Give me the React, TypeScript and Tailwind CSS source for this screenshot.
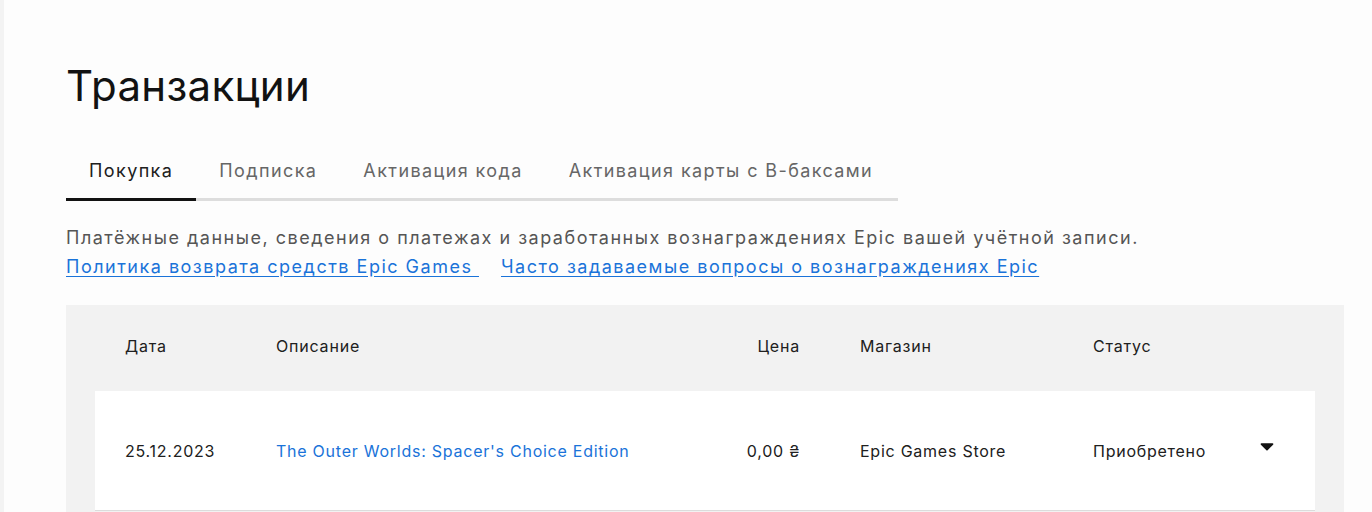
import { FaCaretDown } from 'react-icons/fa';

const tabs = ['Покупка', 'Подписка', 'Активация кода', 'Активация карты с В-баксами'];

export default function App() {
  return (
    <div className="flex min-h-[512px] bg-[#fdfdfd] font-['Inter',sans-serif] text-[#202020]">
      <div className="w-[4px] shrink-0 bg-[#f3f3f3]" />
      <main className="flex-1 pl-[62px] pr-[28px] pt-[56px]">
        <h1 className="text-[42px] leading-[60px] tracking-[0.3px] text-[#121212]">Транзакции</h1>

        {/* tabs */}
        <div className="mt-[41px] flex w-[832px] border-b-[3px] border-[#dddddd]">
          {tabs.map((t, i) => (
            <button
              key={t}
              className={
                i === 0
                  ? '-mb-[3px] border-b-[3px] border-[#121212] px-[23px] pb-[14px] text-[18px] tracking-[1.4px] text-[#202020]'
                  : '-mb-[3px] border-b-[3px] border-transparent px-[23px] pb-[14px] text-[18px] tracking-[1.4px] text-[#666666]'
              }
            >
              {t}
            </button>
          ))}
        </div>

        <p className="mt-[22px] text-[18px] leading-[29px] tracking-[1.5px] text-[#555555]">
          Платёжные данные, сведения о платежах и заработанных вознаграждениях Epic вашей учётной записи.
        </p>
        <div className="flex gap-[22px] text-[18px] leading-[29px] tracking-[1.5px] text-[#1a73d9]">
          <a className="underline underline-offset-[3px]">Политика возврата средств Epic Games&nbsp;</a>
          <a className="underline underline-offset-[3px]">Часто задаваемые вопросы о вознаграждениях Epic</a>
        </div>

        {/* table */}
        <div className="mt-[24px] bg-[#f2f2f2] px-[29px] pb-[4px]">
          <div className="flex h-[86px] items-center pb-[4px] text-[16px] tracking-[0.8px] text-[#202020]">
            <div className="w-[181px] pl-[30px]">Дата</div>
            <div className="w-[430px]">Описание</div>
            <div className="w-[94px] text-right">Цена</div>
            <div className="w-[293px] pl-[60px]">Магазин</div>
            <div className="w-[166px]">Статус</div>
          </div>
          <div className="flex h-[120px] items-center border-b border-[#dcdcdc] bg-white text-[16px] tracking-[0.75px] text-[#202020]">
            <div className="w-[181px] pl-[30px]">25.12.2023</div>
            <div className="w-[430px] text-[#1a73d9]">The Outer Worlds: Spacer's Choice Edition</div>
            <div className="w-[94px] text-right">0,00 ₴</div>
            <div className="w-[293px] pl-[60px]">Epic Games Store</div>
            <div className="w-[166px]">Приобретено</div>
            <FaCaretDown className="-mt-[10px] h-[22px] w-[16px] text-[#121212]" />
          </div>
        </div>
      </main>
    </div>
  );
}
